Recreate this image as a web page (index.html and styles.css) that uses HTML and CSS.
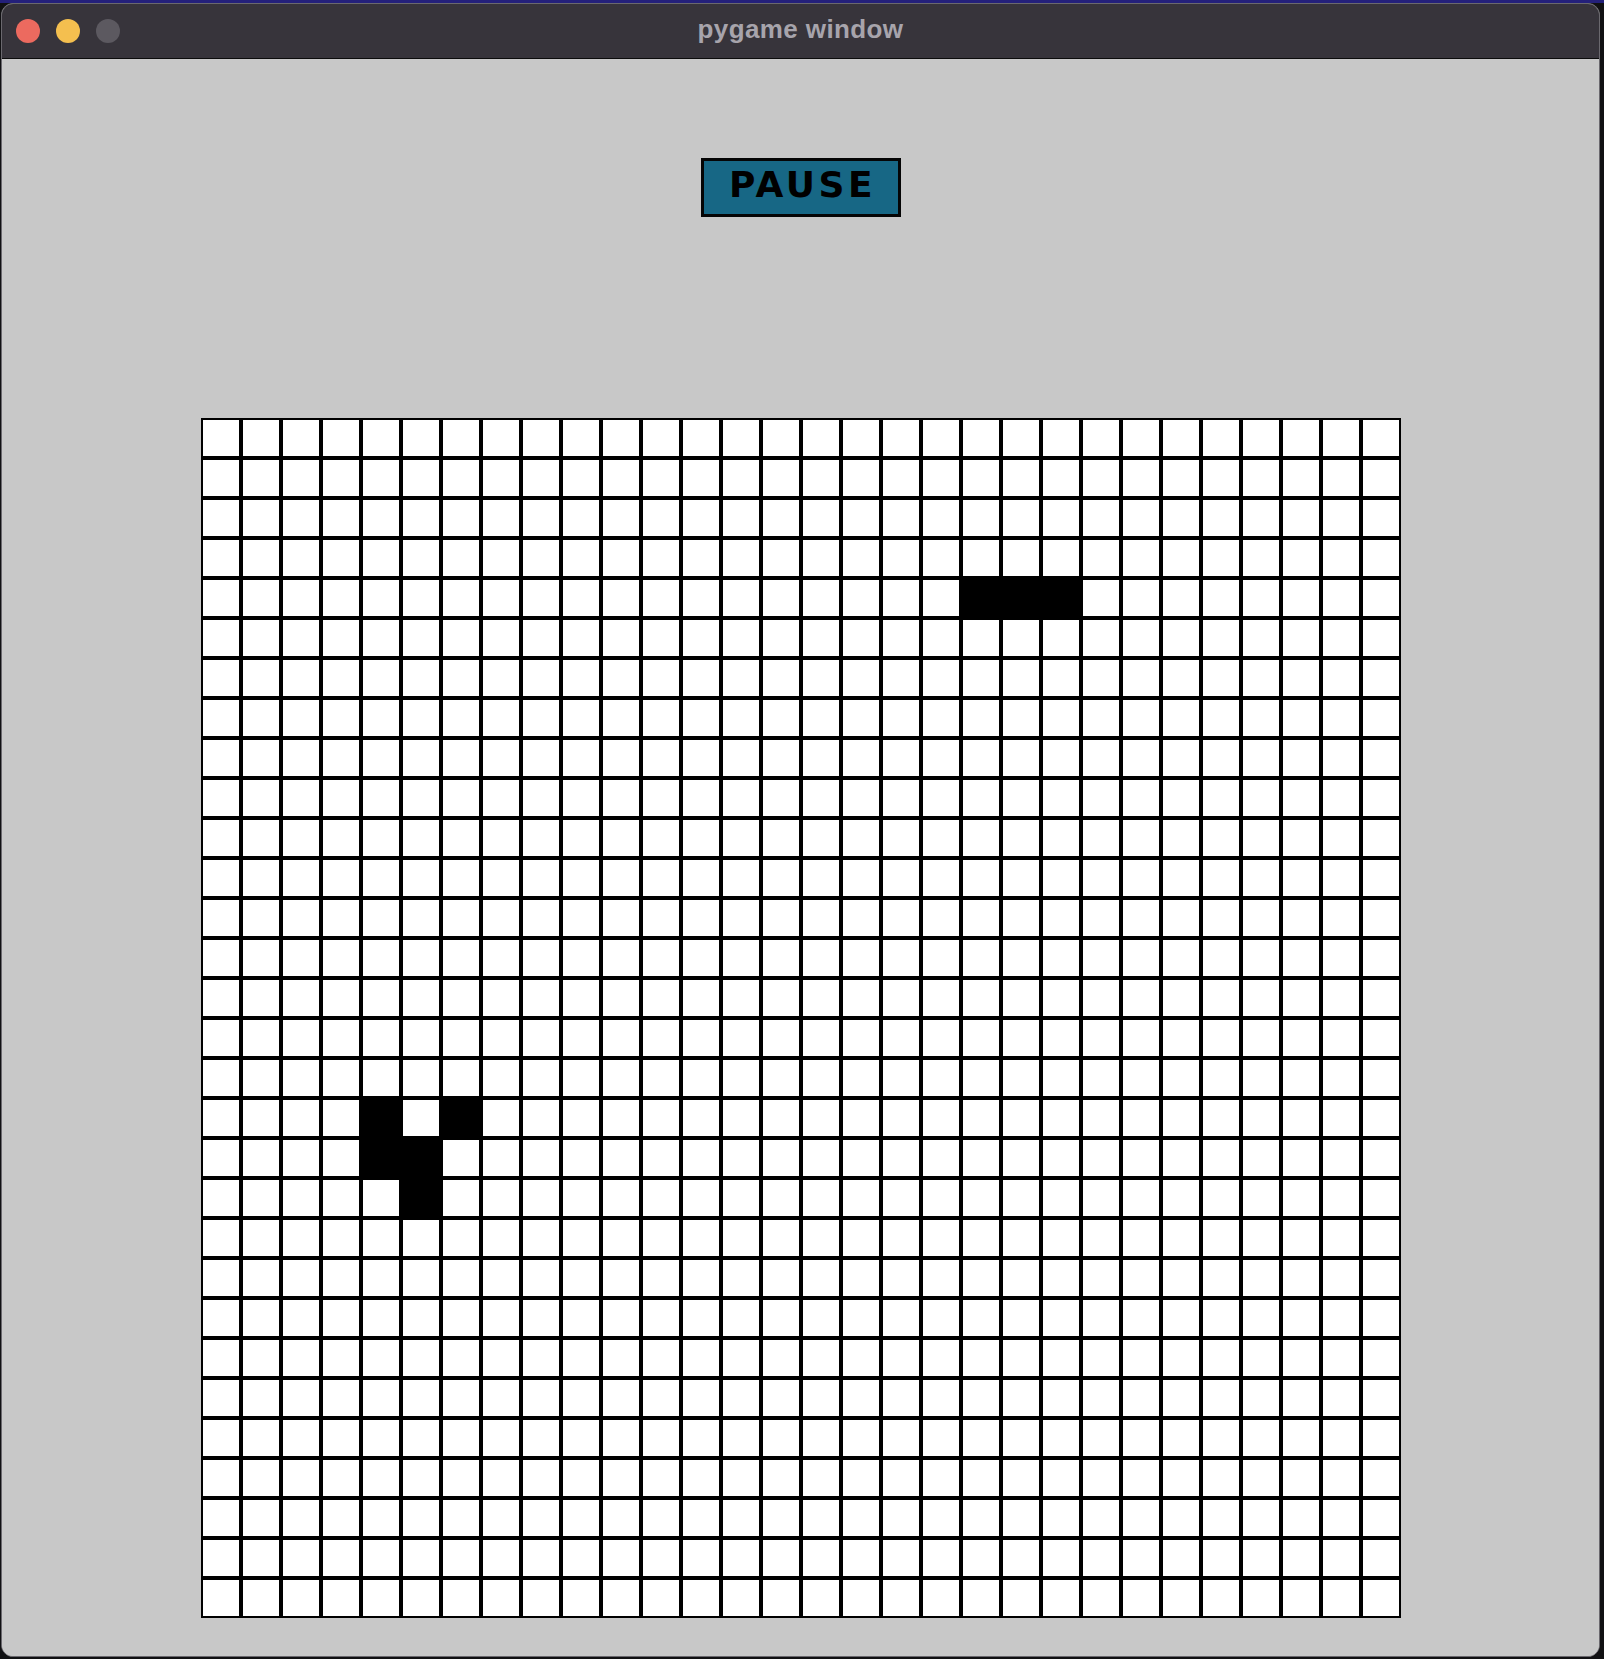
FILE: index.html
```html
<!DOCTYPE html>
<html>
<head>
<meta charset="utf-8">
<title>pygame window</title>
<link rel="stylesheet" href="styles.css">
</head>
<body>
<div class="desktop">
  <div class="window">
    <div class="titlebar">
      <div class="lights">
        <span class="light red"></span>
        <span class="light yellow"></span>
        <span class="light gray"></span>
      </div>
      <div class="title">pygame window</div>
      <div class="spacer"></div>
    </div>
    <div class="content">
      <div class="pause">PAUSE</div>
      <div class="board">
        <div class="block bar"></div>
        <div class="block s1"></div>
        <div class="block s2"></div>
        <div class="block s3"></div>
        <div class="block s4"></div>
      </div>
    </div>
  </div>
</div>
</body>
</html>
```

FILE: styles.css
```css
html, body {
  margin: 0;
  padding: 0;
}
body {
  width: 1604px;
  height: 1659px;
  overflow: hidden;
  background: #111113;
  font-family: "Liberation Sans", Arial, sans-serif;
}
.desktop {
  width: 1604px;
  height: 1659px;
  background: linear-gradient(to bottom, #24207a 0, #24207a 3px, #111113 3px);
  padding-top: 3px;
  padding-left: 1px;
  box-sizing: border-box;
}
.window {
  width: 1599px;
  height: 1654px;
  box-sizing: border-box;
  border: 1px solid #6a686e;
  border-radius: 12px;
  overflow: hidden;
  display: flex;
  flex-direction: column;
  background: #c8c8c8;
}
.titlebar {
  height: 54px;
  flex: none;
  background: #37343b;
  border-bottom: 1px solid #0c0c0c;
  display: grid;
  grid-template-columns: 1fr auto 1fr;
  align-items: center;
}
.lights {
  display: flex;
  gap: 16px;
  padding-left: 14px;
}
.light {
  width: 24px;
  height: 24px;
  border-radius: 50%;
  display: block;
}
.red { background: #ec6a5f; }
.yellow { background: #f4bf4f; }
.gray { background: #5c5960; }
.title {
  color: #a7a4ac;
  font-weight: bold;
  font-size: 26px;
  letter-spacing: 0.4px;
  padding-bottom: 4px;
}
.content {
  flex: 1;
  background: #c8c8c8;
  display: flex;
  flex-direction: column;
  align-items: center;
}
.pause {
  margin-top: 99px;
  width: 200px;
  height: 59px;
  box-sizing: border-box;
  border: 3px solid #050505;
  background: #176785;
  color: #000;
  font-family: "DejaVu Sans", "Liberation Sans", sans-serif;
  font-weight: bold;
  font-size: 36px;
  line-height: 36px;
  letter-spacing: 3.5px;
  padding-left: 4px;
  padding-bottom: 6px;
  display: flex;
  align-items: center;
  justify-content: center;
}
.board {
  margin-top: 201px;
  width: 1200px;
  height: 1200px;
  display: grid;
  grid-template-columns: repeat(30, 40px);
  grid-template-rows: repeat(30, 40px);
  background-color: #fff;
  background-image:
    linear-gradient(to right, #000 0, #000 2px, transparent 2px, transparent 38px, #000 38px),
    linear-gradient(to bottom, #000 0, #000 2px, transparent 2px, transparent 38px, #000 38px);
  background-size: 40px 40px;
}
.block {
  background: #000;
}
.bar { grid-row: 5; grid-column: 20 / span 3; }
.s1 { grid-row: 18; grid-column: 5; }
.s2 { grid-row: 18; grid-column: 7; }
.s3 { grid-row: 19; grid-column: 5 / span 2; }
.s4 { grid-row: 20; grid-column: 6; }
```
